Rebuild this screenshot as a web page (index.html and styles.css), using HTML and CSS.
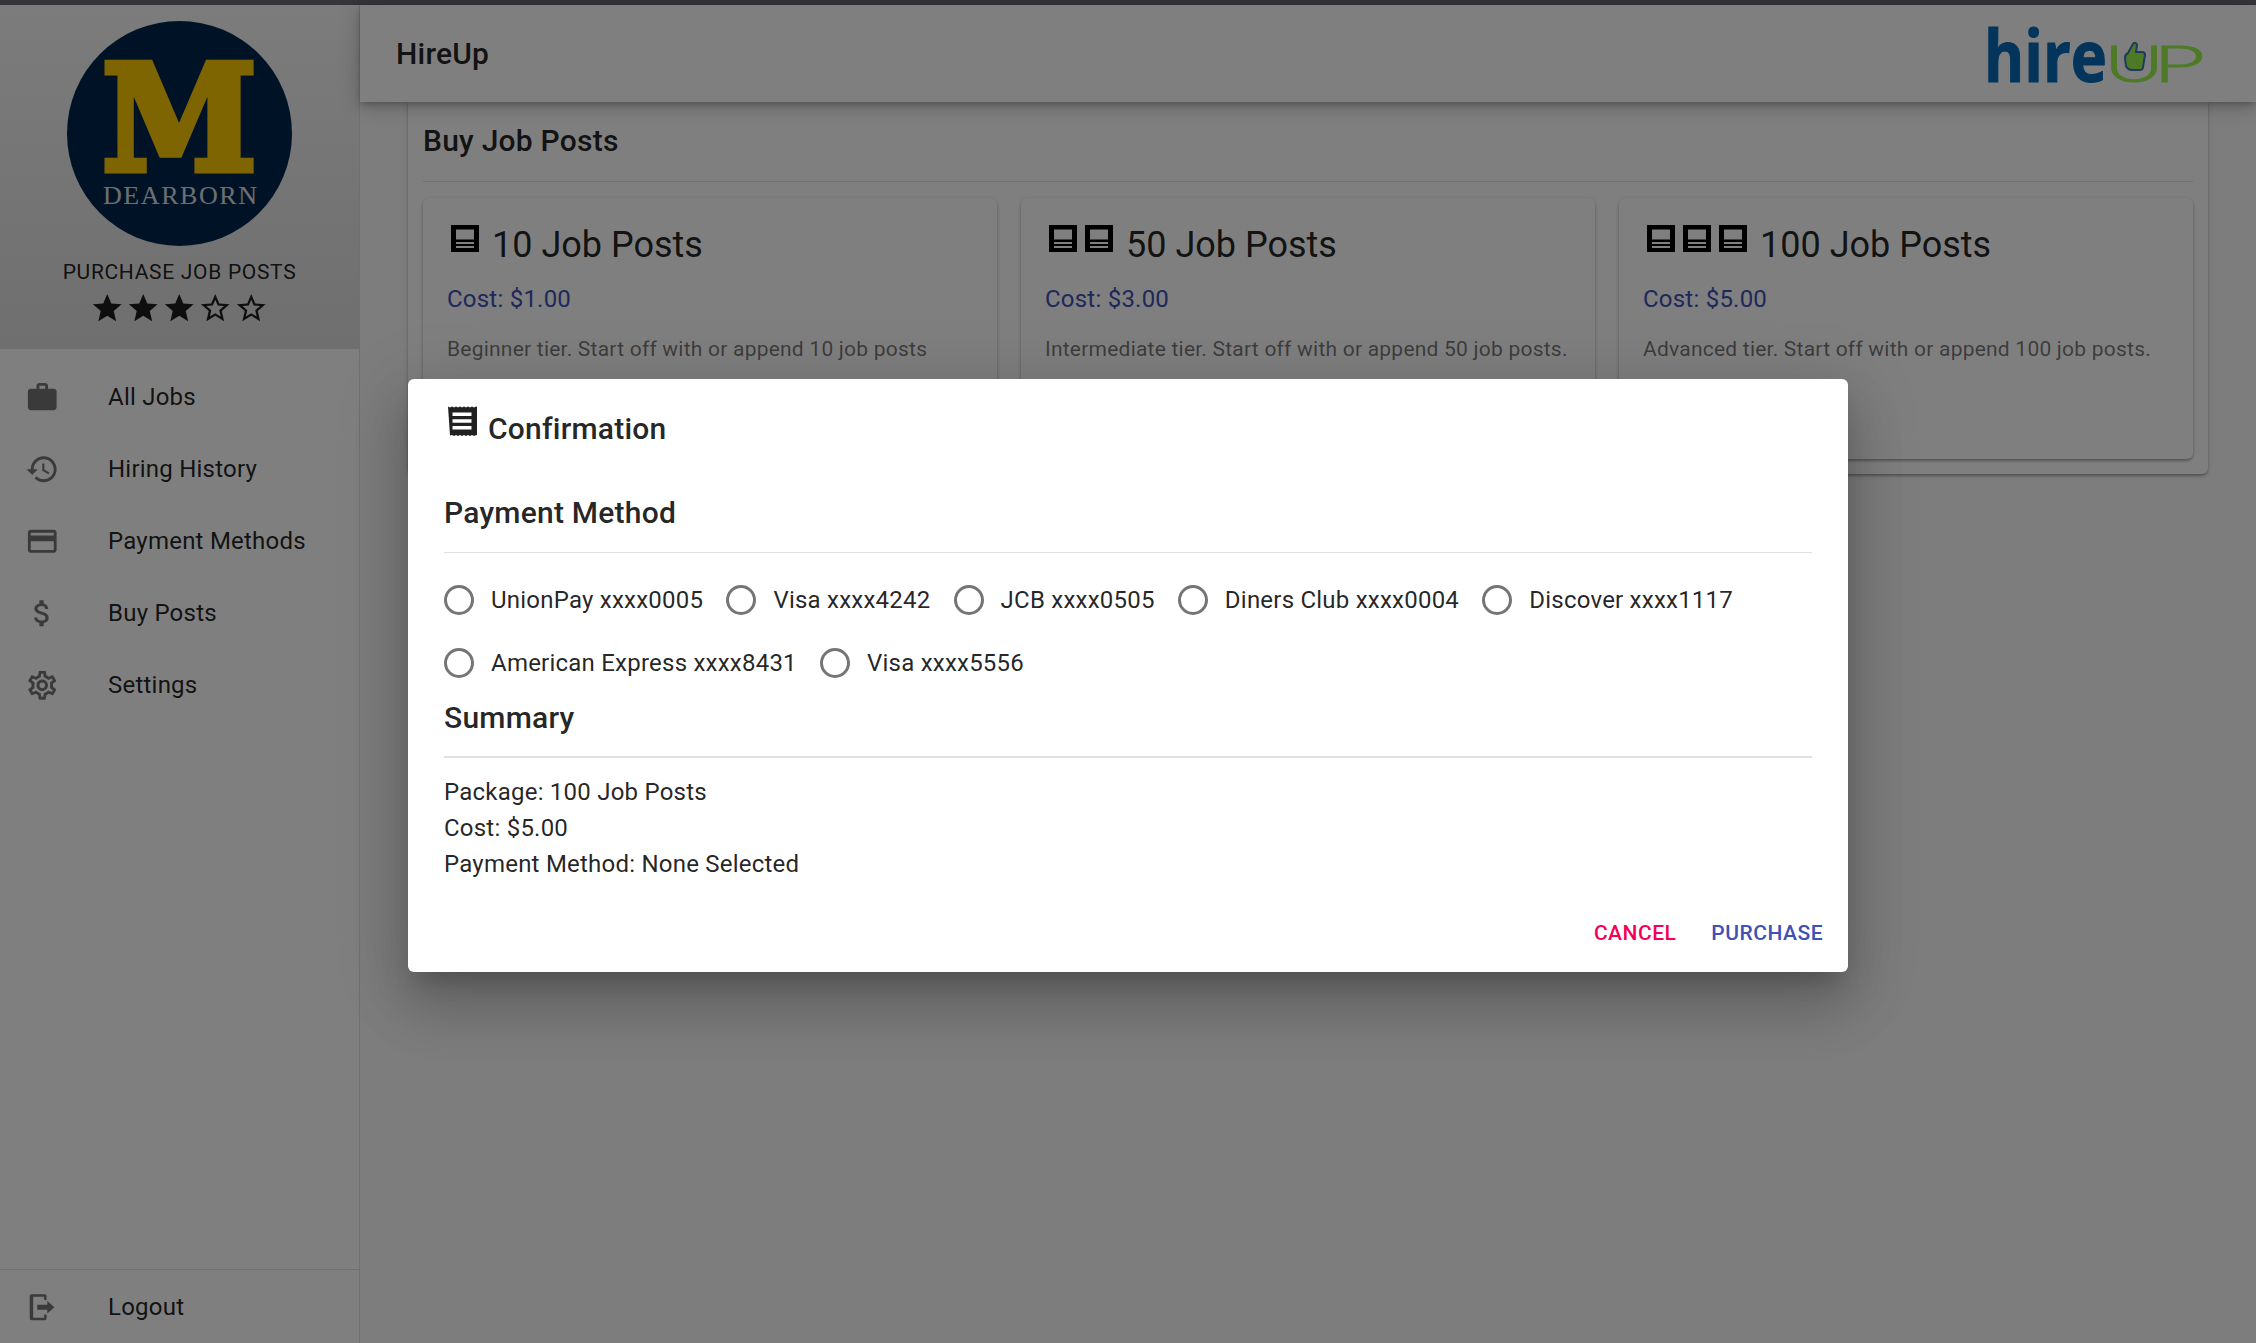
FILE: index.html
```html
<!DOCTYPE html>
<html lang="en">
<head>
  <meta charset="UTF-8">
  <title>HireUp - Buy Job Posts</title>
  <link rel="stylesheet" href="styles.css">
</head>
<body>
  <div class="topstrip"></div>
  <div class="app">
    <aside class="sidebar">
      <div class="profile">
        <svg class="seal" viewBox="0 0 225 225">
          <circle cx="112.500" cy="112.500" r="112.500" fill="#00274c"/>
          <text class="seal-m" x="35" y="149" textLength="155" lengthAdjust="spacingAndGlyphs">M</text>
          <text class="seal-name" x="36" y="183" textLength="154">DEARBORN</text>
        </svg>
        <div class="profile-title">Purchase Job Posts</div>
        <div class="rating">
          <svg viewBox="0 0 24 24"><path d="M12 17.27L18.18 21l-1.64-7.03L22 9.24l-7.19-.61L12 2 9.19 8.63 2 9.24l5.46 4.73L5.82 21z"/></svg>
          <svg viewBox="0 0 24 24"><path d="M12 17.27L18.18 21l-1.64-7.03L22 9.24l-7.19-.61L12 2 9.19 8.63 2 9.24l5.46 4.73L5.82 21z"/></svg>
          <svg viewBox="0 0 24 24"><path d="M12 17.27L18.18 21l-1.64-7.03L22 9.24l-7.19-.61L12 2 9.19 8.63 2 9.24l5.46 4.73L5.82 21z"/></svg>
          <svg viewBox="0 0 24 24"><path d="M22 9.24l-7.19-.62L12 2 9.19 8.63 2 9.24l5.46 4.73L5.82 21 12 17.27 18.18 21l-1.63-7.03L22 9.24zM12 15.4l-3.76 2.27 1-4.28-3.32-2.88 4.38-.38L12 6.1l1.71 4.04 4.38.38-3.32 2.88 1 4.28L12 15.4z"/></svg>
          <svg viewBox="0 0 24 24"><path d="M22 9.24l-7.19-.62L12 2 9.19 8.63 2 9.24l5.46 4.73L5.82 21 12 17.27 18.18 21l-1.63-7.03L22 9.24zM12 15.4l-3.76 2.27 1-4.28-3.32-2.88 4.38-.38L12 6.1l1.71 4.04 4.38.38-3.32 2.88 1 4.28L12 15.4z"/></svg>
        </div>
      </div>

      <nav class="nav">
        <div class="nav-item">
          <svg viewBox="0 0 24 24"><path d="M20 6h-4V4c0-1.11-.89-2-2-2h-4c-1.11 0-2 .89-2 2v2H4c-1.11 0-1.99.89-1.99 2L2 19c0 1.11.89 2 2 2h16c1.11 0 2-.89 2-2V8c0-1.11-.89-2-2-2zm-6 0h-4V4h4v2z"/></svg>
          <span>All Jobs</span>
        </div>
        <div class="nav-item">
          <svg viewBox="0 0 24 24"><path d="M13 3c-4.97 0-9 4.03-9 9H1l3.89 3.89.07.14L9 12H6c0-3.87 3.13-7 7-7s7 3.13 7 7-3.13 7-7 7c-1.93 0-3.68-.79-4.94-2.06l-1.42 1.42C8.27 19.99 10.51 21 13 21c4.97 0 9-4.03 9-9s-4.03-9-9-9zm-1 5v5l4.28 2.54.72-1.21-3.5-2.08V8H12z"/></svg>
          <span>Hiring History</span>
        </div>
        <div class="nav-item">
          <svg viewBox="0 0 24 24"><path d="M20 4H4c-1.11 0-1.99.89-1.99 2L2 18c0 1.11.89 2 2 2h16c1.11 0 2-.89 2-2V6c0-1.11-.89-2-2-2zm0 14H4v-6h16v6zm0-10H4V6h16v2z"/></svg>
          <span>Payment Methods</span>
        </div>
        <div class="nav-item">
          <svg viewBox="0 0 24 24"><path d="M11.8 10.9c-2.27-.59-3-1.2-3-2.15 0-1.09 1.01-1.85 2.7-1.85 1.78 0 2.44.85 2.5 2.1h2.21c-.07-1.72-1.12-3.3-3.21-3.81V3h-3v2.16c-1.94.42-3.5 1.68-3.5 3.61 0 2.31 1.91 3.46 4.7 4.13 2.5.6 3 1.48 3 2.41 0 .69-.49 1.79-2.7 1.79-2.06 0-2.87-.92-2.98-2.1h-2.2c.12 2.19 1.76 3.42 3.68 3.83V21h3v-2.15c1.95-.37 3.5-1.5 3.5-3.55 0-2.84-2.43-3.81-4.7-4.4z"/></svg>
          <span>Buy Posts</span>
        </div>
        <div class="nav-item">
          <svg viewBox="0 0 24 24"><path d="M19.43 12.98c.04-.32.07-.64.07-.98 0-.34-.03-.66-.07-.98l2.11-1.65c.19-.15.24-.42.12-.64l-2-3.46c-.09-.16-.26-.25-.44-.25-.06 0-.12.01-.17.03l-2.49 1c-.52-.4-1.08-.73-1.69-.98l-.38-2.65C14.46 2.18 14.25 2 14 2h-4c-.25 0-.46.18-.49.42l-.38 2.65c-.61.25-1.17.59-1.69.98l-2.49-1c-.06-.02-.12-.03-.18-.03-.17 0-.34.09-.43.25l-2 3.46c-.13.22-.07.49.12.64l2.11 1.65c-.04.32-.07.65-.07.98 0 .33.03.66.07.98l-2.11 1.65c-.19.15-.24.42-.12.64l2 3.46c.09.16.26.25.44.25.06 0 .12-.01.17-.03l2.49-1c.52.4 1.08.73 1.69.98l.38 2.65c.03.24.24.42.49.42h4c.25 0 .46-.18.49-.42l.38-2.65c.61-.25 1.17-.59 1.69-.98l2.49 1c.06.02.12.03.18.03.17 0 .34-.09.43-.25l2-3.46c.12-.22.07-.49-.12-.64l-2.11-1.65zm-1.98-1.71c.04.31.05.52.05.73 0 .21-.02.43-.05.73l-.14 1.13.89.7 1.08.84-.7 1.21-1.27-.51-1.04-.42-.9.68c-.43.32-.84.56-1.25.73l-1.06.43-.16 1.13-.2 1.35h-1.4l-.19-1.35-.16-1.13-1.06-.43c-.43-.18-.83-.41-1.23-.71l-.91-.7-1.06.43-1.27.51-.7-1.21 1.08-.84.89-.7-.14-1.13c-.03-.31-.05-.54-.05-.74s.02-.43.05-.73l.14-1.13-.89-.7-1.08-.84.7-1.21 1.27.51 1.04.42.9-.68c.43-.32.84-.56 1.25-.73l1.06-.43.16-1.13.2-1.35h1.39l.19 1.35.16 1.13 1.06.43c.43.18.83.41 1.23.71l.91.7 1.06-.43 1.27-.51.7 1.21-1.07.85-.89.7.14 1.13zM12 8c-2.21 0-4 1.79-4 4s1.79 4 4 4 4-1.79 4-4-1.79-4-4-4zm0 6c-1.1 0-2-.9-2-2s.9-2 2-2 2 .9 2 2-.9 2-2 2z"/></svg>
          <span>Settings</span>
        </div>
      </nav>

      <div class="logout">
        <div class="nav-item">
          <svg viewBox="0 0 24 24"><path d="M4.600 3h9.200c.7 0 1.200.5 1.200 1.200V7h-1.700V4.700H5.700v14.600h7.600V17H15v2.800c0 .7-.5 1.200-1.200 1.200H4.600c-.7 0-1.300-.5-1.300-1.200V4.200C3.300 3.500 3.900 3 4.600 3z"/><path d="M8.500 10.200h7V7.600l5 4.400-5 4.400v-2.600h-7z"/></svg>
          <span>Logout</span>
        </div>
      </div>
    </aside>

    <div class="main">
      <header class="topbar">
        <h1>HireUp</h1>
        <svg class="brand" viewBox="0 0 230 70">
          <text class="brand-hire" x="4" y="62.500" textLength="123" lengthAdjust="spacingAndGlyphs">hire</text>
          <text class="brand-up" x="124" y="62.500" textLength="60" lengthAdjust="spacingAndGlyphs">U</text>
          <text class="brand-up" x="173" y="62.500" textLength="52" lengthAdjust="spacingAndGlyphs">P</text>
          <path class="brand-thumb" d="M148 34l5-9c1-2 4-1 4 1l-1 7h6c2 0 3 1 3 3l-2 12c0 2-2 3-4 3h-7c-3 0-5-2-6-4l-1-8c0-2 1-4 3-5z"/>
        </svg>
      </header>

      <section class="paper">
        <h2 class="paper-title">Buy Job Posts</h2>
        <div class="cards">
          <article class="card">
            <div class="card-head">
              <svg class="post-icon" viewBox="0 0 36 36"><path fill-rule="evenodd" d="M5 5h28v27H5zM10 9.500v10h18v-10zM10 22v2h18v-2zM10 26v2h18v-2z"/></svg>
              <span class="card-title">10 Job Posts</span>
            </div>
            <p class="cost">Cost: $1.00</p>
            <p class="desc">Beginner tier. Start off with or append 10 job posts</p>
          </article>
          <article class="card">
            <div class="card-head">
              <svg class="post-icon" viewBox="0 0 36 36"><path fill-rule="evenodd" d="M5 5h28v27H5zM10 9.500v10h18v-10zM10 22v2h18v-2zM10 26v2h18v-2z"/></svg>
              <svg class="post-icon" viewBox="0 0 36 36"><path fill-rule="evenodd" d="M5 5h28v27H5zM10 9.500v10h18v-10zM10 22v2h18v-2zM10 26v2h18v-2z"/></svg>
              <span class="card-title">50 Job Posts</span>
            </div>
            <p class="cost">Cost: $3.00</p>
            <p class="desc">Intermediate tier. Start off with or append 50 job posts.</p>
          </article>
          <article class="card">
            <div class="card-head">
              <svg class="post-icon" viewBox="0 0 36 36"><path fill-rule="evenodd" d="M5 5h28v27H5zM10 9.500v10h18v-10zM10 22v2h18v-2zM10 26v2h18v-2z"/></svg>
              <svg class="post-icon" viewBox="0 0 36 36"><path fill-rule="evenodd" d="M5 5h28v27H5zM10 9.500v10h18v-10zM10 22v2h18v-2zM10 26v2h18v-2z"/></svg>
              <svg class="post-icon" viewBox="0 0 36 36"><path fill-rule="evenodd" d="M5 5h28v27H5zM10 9.500v10h18v-10zM10 22v2h18v-2zM10 26v2h18v-2z"/></svg>
              <span class="card-title">100 Job Posts</span>
            </div>
            <p class="cost">Cost: $5.00</p>
            <p class="desc">Advanced tier. Start off with or append 100 job posts.</p>
          </article>
        </div>
      </section>
    </div>

    <div class="overlay">
      <div class="dialog">
        <div class="dialog-title">
          <svg viewBox="0 0 30 32"><path fill-rule="evenodd" d="M1 1.500l2 1 2-1 2 1 2-1 2 1 2-1 2 1 2-1 2 1 2-1 2 1 2-1 2 1 2-1 2 .5V30.500l-2-.5-2 1-2-1-2 1-2-1-2 1-2-1-2 1-2-1-2 1-2-1-2 1-2-1-2 .5zM5.500 7.500v3.500h19V7.500zM5.500 14.200v3.500h19v-3.500zM5.500 21v3.500h19V21z"/></svg>
          <span>Confirmation</span>
        </div>

        <h3 class="section-title">Payment Method</h3>
        <div class="radios">
          <label class="radio"><i></i>UnionPay xxxx0005</label>
          <label class="radio"><i></i>Visa xxxx4242</label>
          <label class="radio"><i></i>JCB xxxx0505</label>
          <label class="radio"><i></i>Diners Club xxxx0004</label>
          <label class="radio"><i></i>Discover xxxx1117</label>
          <label class="radio"><i></i>American Express xxxx8431</label>
          <label class="radio"><i></i>Visa xxxx5556</label>
        </div>

        <h3 class="section-title summary-title">Summary</h3>
        <div class="summary">
          <div>Package: 100 Job Posts</div>
          <div>Cost: $5.00</div>
          <div>Payment Method: None Selected</div>
        </div>

        <div class="actions">
          <button class="btn btn-cancel">Cancel</button>
          <button class="btn btn-buy">Purchase</button>
        </div>
      </div>
    </div>
  </div>
</body>
</html>
```

FILE: styles.css
```css
html, body {
  height: 100%;
}
body {
  margin: 0;
  display: flex;
  flex-direction: column;
  overflow: hidden;
  font-family: Roboto, 'Liberation Sans', sans-serif;
  font-size: 24px;
  letter-spacing: 0.225px;
  color: rgba(0, 0, 0, 0.87);
  background: #fafafa;
}
h1, h2, h3, p {
  margin: 0;
}
.topstrip {
  height: 5px;
  flex: none;
  background: #35363a;
}
.app {
  position: relative;
  flex: 1;
  display: flex;
  min-height: 0;
}

/* sidebar */
.sidebar {
  width: 359px;
  flex: none;
  display: flex;
  flex-direction: column;
  background: #fff;
  border-right: 1px solid #e0e0e0;
}
.profile {
  height: 344px;
  box-sizing: border-box;
  padding-top: 16px;
  display: flex;
  flex-direction: column;
  align-items: center;
  background: linear-gradient(#f8f8f8, #dedede);
}
.seal {
  width: 225px;
  height: 225px;
  flex: none;
}
.seal-m {
  font-family: 'DejaVu Serif', serif;
  font-weight: 700;
  font-size: 146px;
  fill: #ffcb05;
  stroke: #ffcb05;
  stroke-width: 7px;
}
.seal-name {
  font-family: 'Liberation Serif', serif;
  font-size: 26px;
  letter-spacing: 0;
  fill: #fff;
  opacity: 0.85;
}
.profile-title {
  margin-top: 13px;
  font-size: 21px;
  line-height: 26px;
  letter-spacing: 0.69px;
  text-transform: uppercase;
}
.rating {
  margin-top: 6px;
  display: flex;
  gap: 1.500px;
}
.rating svg {
  width: 34.500px;
  height: 34.500px;
  fill: rgba(0, 0, 0, 0.87);
}
.nav {
  padding-top: 12px;
  flex: 1;
}
.nav-item {
  height: 72px;
  display: flex;
  align-items: center;
  padding-left: 25px;
  gap: 48.500px;
}
.nav-item svg {
  width: 34.500px;
  height: 34.500px;
  flex: none;
  fill: rgba(0, 0, 0, 0.54);
}
.logout {
  border-top: 1px solid #e0e0e0;
  padding-top: 1px;
}

/* top bar and page */
.main {
  flex: 1;
  min-width: 0;
  display: flex;
  flex-direction: column;
}
.topbar {
  height: 97px;
  flex: none;
  position: relative;
  z-index: 1;
  display: flex;
  align-items: center;
  justify-content: space-between;
  padding: 0 46px 0 36px;
  background: #fff;
  box-shadow: 0 3px 6px -1px rgba(0, 0, 0, 0.2), 0 6px 14px 0 rgba(0, 0, 0, 0.14), 0 1px 26px 0 rgba(0, 0, 0, 0.12);
}
.topbar h1 {
  font-size: 30px;
  font-weight: 500;
}
.brand {
  width: 230px;
  height: 70px;
}
.brand-hire {
  font-family: 'Open Sans', sans-serif;
  font-weight: 700;
  font-size: 72px;
  letter-spacing: 0;
  fill: #066ab8;
  stroke: #066ab8;
  stroke-width: 1px;
}
.brand-up {
  font-family: Lato, sans-serif;
  font-weight: 300;
  font-size: 52px;
  letter-spacing: 0;
  fill: #9cf450;
  stroke: #9cf450;
  stroke-width: 1px;
}
.brand-thumb {
  fill: #9cf450;
  stroke: #3d74b8;
  stroke-width: 2px;
}
.paper {
  margin: 0 48px;
  padding: 0 15px 15px;
  background: #fff;
  border-radius: 0 0 6px 6px;
  box-shadow: 0 3px 3px -1px rgba(0, 0, 0, 0.2), 0 1px 3px 0 rgba(0, 0, 0, 0.14), 0 1px 5px 0 rgba(0, 0, 0, 0.12);
}
.paper-title {
  height: 80px;
  box-sizing: border-box;
  padding-top: 21px;
  font-size: 30px;
  line-height: 36px;
  font-weight: 500;
  border-bottom: 1px solid #e0e0e0;
}
.cards {
  display: grid;
  grid-template-columns: repeat(3, 1fr);
  gap: 24px;
  margin-top: 16px;
}
.card {
  height: 261px;
  box-sizing: border-box;
  padding: 22px 24px;
  border-radius: 6px;
  background: #fff;
  box-shadow: 0 3px 3px -1px rgba(0, 0, 0, 0.2), 0 1px 3px 0 rgba(0, 0, 0, 0.14), 0 1px 5px 0 rgba(0, 0, 0, 0.12);
}
.card-head {
  display: flex;
  align-items: flex-start;
  margin-left: -1px;
}
.post-icon {
  width: 36px;
  height: 36px;
  flex: none;
}
.card-title {
  margin: 5px 0 0 10px;
  font-size: 36px;
  line-height: 40px;
  letter-spacing: 0;
}
.cost {
  margin-top: 16px;
  line-height: 36px;
  color: #3f51b5;
}
.desc {
  margin-top: 14px;
  font-size: 21px;
  line-height: 36px;
  color: rgba(0, 0, 0, 0.54);
}

/* dialog */
.overlay {
  position: absolute;
  inset: 0;
  z-index: 5;
  display: flex;
  align-items: center;
  justify-content: center;
  background: rgba(0, 0, 0, 0.5);
}
.dialog {
  width: 1440px;
  height: 593px;
  margin-top: 3px;
  box-sizing: border-box;
  padding: 0 36px;
  display: flex;
  flex-direction: column;
  background: #fff;
  border-radius: 6px;
  box-shadow: 0 16px 22px -10px rgba(0, 0, 0, 0.2), 0 35px 55px 4px rgba(0, 0, 0, 0.14), 0 13px 66px 12px rgba(0, 0, 0, 0.12);
}
.dialog-title {
  display: flex;
  align-items: flex-start;
  margin: 26px 0 0 3px;
  font-size: 30px;
  font-weight: 500;
}
.dialog-title svg {
  width: 30px;
  height: 32px;
  fill: rgba(0, 0, 0, 0.87);
}
.dialog-title span {
  margin: 6px 0 0 11px;
  line-height: 36px;
}
.section-title {
  margin-top: 48px;
  padding-bottom: 21px;
  font-size: 30px;
  line-height: 36px;
  font-weight: 500;
  border-bottom: 1px solid #e0e0e0;
}
.summary-title {
  margin-top: 6px;
  padding-bottom: 20px;
  border-bottom-width: 2px;
}
.radios {
  display: flex;
  flex-wrap: wrap;
  padding-top: 15px;
  column-gap: 23.200px;
}
.radio {
  height: 63px;
  display: flex;
  align-items: center;
  gap: 17px;
}
.radio i {
  width: 30px;
  height: 30px;
  box-sizing: border-box;
  border: 3px solid #757575;
  border-radius: 50%;
}
.summary {
  padding-top: 16px;
  line-height: 36px;
}
.actions {
  margin: auto -11px 0 0;
  padding-bottom: 24px;
  display: flex;
  justify-content: flex-end;
  gap: 35px;
}
.btn {
  padding: 0;
  border: 0;
  background: none;
  font-family: inherit;
  font-size: 21px;
  font-weight: 500;
  line-height: 30px;
  letter-spacing: 0.5px;
  text-transform: uppercase;
}
.btn-cancel {
  color: #f50057;
}
.btn-buy {
  color: #3f51b5;
}
```
